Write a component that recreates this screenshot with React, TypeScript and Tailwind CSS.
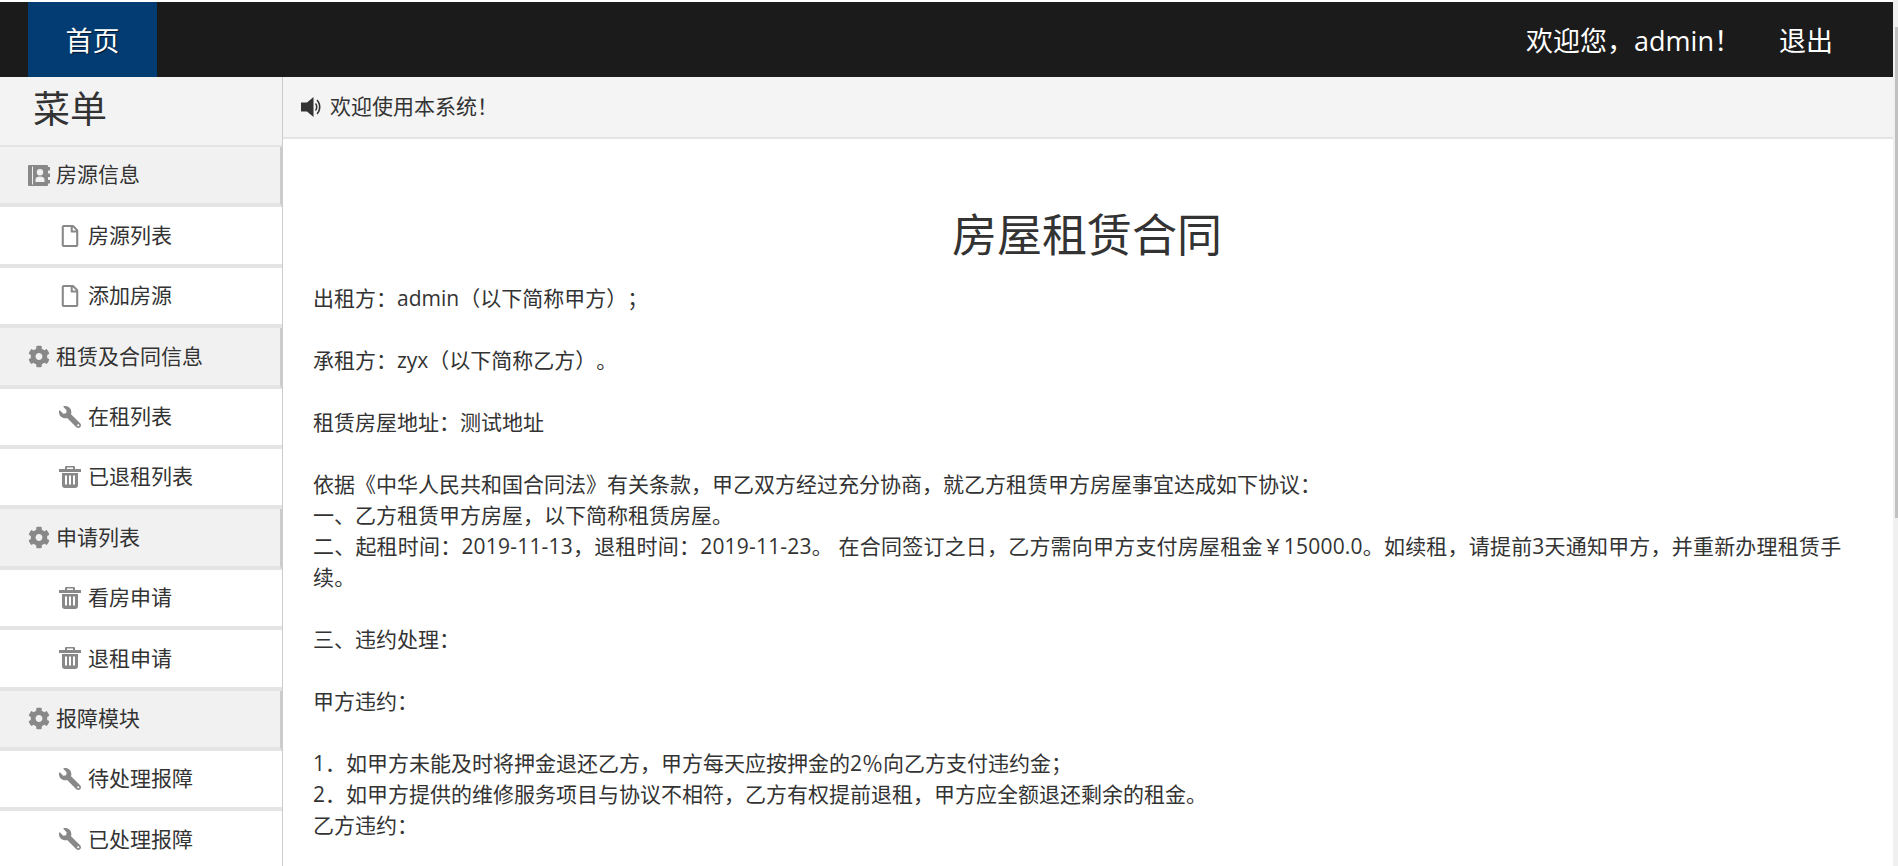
import { FaCog, FaRegFile, FaWrench } from "react-icons/fa";

function TrashIcon() {
  return (
    <svg viewBox="0 0 22 22" className="w-[22px] h-[22px] text-[#888]" fill="currentColor">
      <path fillRule="evenodd" d="M7 0h8a1 1 0 0 1 1 1v2h6v3H0V3h6V1a1 1 0 0 1 1-1zm1 1.500V3h6V1.500H8z" />
      <path fillRule="evenodd" d="M3 7h16v12a3 3 0 0 1-3 3H6a3 3 0 0 1-3-3V7zm3 2.500v9h2v-9H6zm4 0v9h2v-9h-2zm4 0v9h2v-9h-2z" />
    </svg>
  );
}

function ContactIcon() {
  return (
    <svg viewBox="0 0 22 21" className="w-[22px] h-[21px] text-[#888]" fill="currentColor">
      <path fillRule="evenodd" d="M1 0h18a1 1 0 0 1 1 1v19a1 1 0 0 1-1 1H1a1 1 0 0 1-1-1V1a1 1 0 0 1 1-1zm3 1.500v18h1v-18H4zm8 2.500a3.200 3.200 0 1 0 0 6.400 3.200 3.200 0 0 0 0-6.400zM7.500 17h9v-2.500c0-2-2-3-4.500-3s-4.500 1-4.500 3V17z" />
      <path d="M20 2h2v3.500h-2zM20 8.500h2V12h-2zM20 15h2v3.500h-2z" />
    </svg>
  );
}

function SpeakerIcon() {
  return (
    <svg viewBox="0 0 22 22" className="w-[22px] h-[22px] text-[#333]" fill="currentColor">
      <path d="M12.500 1v20L6 15.500H0v-9h6L12.500 1z" />
      <path d="M15 7c2 2 2 6 0 8l-1-1c1.300-1.500 1.300-4.500 0-6l1-1z" />
      <path d="M16.500 3.500c4 4 4 11 0 15l-1-1.200c3.200-3.300 3.200-9.300 0-12.600l1-1.200z" />
    </svg>
  );
}

const file = <FaRegFile size={22} className="text-[#888]" />;
const gear = <FaCog size={23} className="text-[#888]" />;
const wrench = <FaWrench size={22} className="text-[#888] -scale-x-100" />;
const trash = <TrashIcon />;

const groups = [
  {
    title: "房源信息",
    icon: <ContactIcon />,
    items: [
      { label: "房源列表", icon: file },
      { label: "添加房源", icon: file },
    ],
  },
  {
    title: "租赁及合同信息",
    icon: gear,
    items: [
      { label: "在租列表", icon: wrench },
      { label: "已退租列表", icon: trash },
    ],
  },
  {
    title: "申请列表",
    icon: gear,
    items: [
      { label: "看房申请", icon: trash },
      { label: "退租申请", icon: trash },
    ],
  },
  {
    title: "报障模块",
    icon: gear,
    items: [
      { label: "待处理报障", icon: wrench },
      { label: "已处理报障", icon: wrench },
    ],
  },
];

export default function App() {
  return (
    <div
      className="h-[866px] w-[1898px] overflow-hidden bg-white text-[#333] flex flex-col relative [text-spacing-trim:space-all]"
      style={{ fontFamily: '"Open Sans", "Noto Sans CJK SC", sans-serif' }}
    >
      <header className="mt-[2px] h-[75px] w-[1893px] shrink-0 bg-[#1b1b1b] flex items-stretch justify-between pl-[28px] pr-[60px] text-white text-[27px]">
        <a className="w-[129px] bg-[#033c73] flex items-center justify-center pt-[3px] [text-shadow:1px_1px_1px_rgba(0,0,0,0.6)]">首页</a>
        <div className="flex items-center gap-[38px] pt-[3px]">
          <span>欢迎您，admin！</span>
          <span>退出</span>
        </div>
      </header>

      <div className="flex flex-1 w-[1893px] min-h-0">
        <aside className="w-[283px] shrink-0 border-r border-[#ccc]">
          <div className="h-[70px] bg-[#f3f3f3] border-b-2 border-[#e4e4e4] pl-[33px] flex items-center text-[37px] leading-none pb-[6px]">菜单</div>
          {groups.map((g) => (
            <div key={g.title}>
              <div className="h-[60.4px] bg-[#f1f1f1] border-b-4 border-[#e4e4e4] border-r-2 border-r-[#ccc] pl-[28px] flex items-center gap-[6px] text-[21px]">
                <span className="w-[22px] flex justify-center">{g.icon}</span>
                <span>{g.title}</span>
              </div>
              {g.items.map((it) => (
                <div
                  key={it.label}
                  className="h-[60.4px] bg-white border-b-4 border-[#e4e4e4] pl-[59px] flex items-center gap-[7px] text-[21px]"
                >
                  <span className="w-[22px] flex justify-center">{it.icon}</span>
                  <span>{it.label}</span>
                </div>
              ))}
            </div>
          ))}
        </aside>

        <main className="flex-1 min-w-0">
          <div className="h-[62px] bg-[#f4f4f4] border-b-2 border-[#e4e4e4] pl-[18px] flex items-center gap-[7px] text-[21px]">
            <SpeakerIcon />
            <span>欢迎使用本系统！</span>
          </div>
          <div className="pl-[30px] pr-[32px] text-[21px] leading-[31px]">
            <h1 className="text-[45px] leading-[50px] text-center mt-[71px] mb-[23px]">房屋租赁合同</h1>
            <p>出租方：admin（以下简称甲方）；</p>
            <p className="mt-[31px]">承租方：zyx（以下简称乙方）。</p>
            <p className="mt-[31px]">租赁房屋地址：测试地址</p>
            <p className="mt-[31px]">依据《中华人民共和国合同法》有关条款，甲乙双方经过充分协商，就乙方租赁甲方房屋事宜达成如下协议：</p>
            <p>一、乙方租赁甲方房屋，以下简称租赁房屋。</p>
            <p className="tracking-[0.2px]">二、起租时间：2019-11-13，退租时间：2019-11-23。 在合同签订之日，乙方需向甲方支付房屋租金￥15000.0。如续租，请提前3天通知甲方，并重新办理租赁手续。</p>
            <p className="mt-[31px]">三、违约处理：</p>
            <p className="mt-[31px]">甲方违约：</p>
            <p className="mt-[31px]">1．如甲方未能及时将押金退还乙方，甲方每天应按押金的2％向乙方支付违约金；</p>
            <p>2．如甲方提供的维修服务项目与协议不相符，乙方有权提前退租，甲方应全额退还剩余的租金。</p>
            <p>乙方违约：</p>
          </div>
        </main>
      </div>

      <div className="absolute right-0 top-0 bottom-0 w-[5px] bg-[#f0f0f0] pl-[2px]">
        <div className="mt-[27px] h-[491px] bg-[#c1c1c1]" />
      </div>
    </div>
  );
}
